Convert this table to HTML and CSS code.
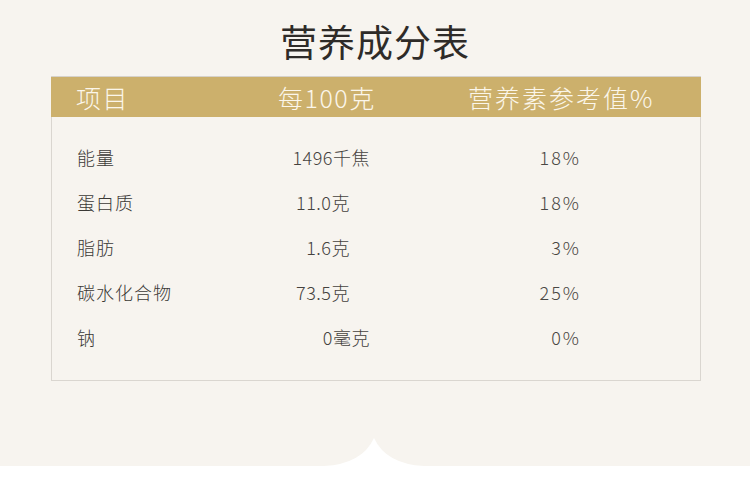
FILE: index.html
```html
<!DOCTYPE html>
<html lang="zh-CN">
<head>
<meta charset="utf-8">
<title>营养成分表</title>
<link rel="stylesheet" href="styles.css">
</head>
<body>
<section class="page">
  <h1 class="title">营养成分表</h1>
  <div class="table">
    <div class="head">
      <span class="h-name">项目</span>
      <span class="h-val">每100克</span>
      <span class="h-pct">营养素参考值%</span>
    </div>
    <div class="body">
      <div class="row"><span class="name">能量</span><span class="val">1496千焦</span><span class="pct">18%</span></div>
      <div class="row"><span class="name">蛋白质</span><span class="val short">11.0克</span><span class="pct">18%</span></div>
      <div class="row"><span class="name">脂肪</span><span class="val short">1.6克</span><span class="pct">3%</span></div>
      <div class="row"><span class="name">碳水化合物</span><span class="val short">73.5克</span><span class="pct">25%</span></div>
      <div class="row"><span class="name">钠</span><span class="val">0毫克</span><span class="pct">0%</span></div>
    </div>
  </div>
  <svg class="notch" width="100" height="30" viewBox="0 0 100 30" aria-hidden="true">
    <path d="M0 30 Q38 28 50 2 Q62 28 100 30 Z" fill="#ffffff"/>
  </svg>
</section>
</body>
</html>
```

FILE: styles.css
```css
html, body {
  margin: 0;
  padding: 0;
  background: #ffffff;
}
body {
  width: 750px;
  height: 500px;
  overflow: hidden;
  font-family: "Noto Sans CJK SC", "Noto Sans", sans-serif;
}
.page {
  position: relative;
  height: 466px;
  background: #f7f4ef;
  padding-top: 17px;
  box-sizing: border-box;
}
.title {
  margin: 0;
  height: 48px;
  line-height: 48px;
  text-align: center;
  font-size: 37px;
  font-weight: 400;
  letter-spacing: 1px;
  color: #2e2b28;
}
.table {
  margin: 11px 0 0 51px;
  width: 650px;
  box-sizing: border-box;
  border: 1px solid #dad6d0;
  border-top: 1px solid #d6d2cb;
}
.head {
  display: grid;
  grid-template-columns: 202px 190px 1fr;
  padding-left: 25px;
  height: 40px;
  line-height: 40px;
  background: #ccb06c;
  color: #fbf6ea;
  font-size: 25px;
  font-weight: 300;
  letter-spacing: 1.5px;
  margin: 0 -1px;
}
.h-pct {
  letter-spacing: 2px;
}
.body {
  padding: 18px 0 20px 25px;
}
.row {
  display: grid;
  grid-template-columns: 203px 90px 211px;
  height: 45px;
  line-height: 45px;
  font-size: 18px;
  font-weight: 300;
  color: #3b3936;
  letter-spacing: 1px;
}
.name {
  text-align: left;
}
.val {
  text-align: right;
  letter-spacing: 0.5px;
  color: #45423e;
}
.val.short {
  padding-right: 20px;
}
.pct {
  text-align: right;
  letter-spacing: 2px;
  color: #4a4743;
}
.notch {
  position: absolute;
  left: 324px;
  bottom: 0;
  display: block;
}
```
